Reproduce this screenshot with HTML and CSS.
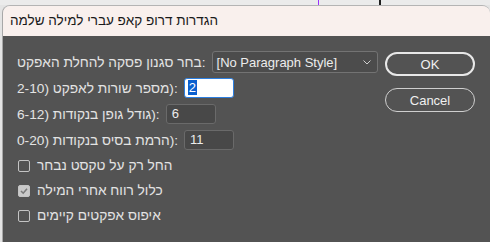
FILE: index.html
```html
<!DOCTYPE html>
<html lang="he">

<head>
  <meta charset="UTF-8">
  <meta name="viewport" content="width=device-width, initial-scale=1.0">
  <title>Drop Cap</title>
  <link rel="stylesheet" href="styles.css">
</head>

<body>
  <div class="backdrop">
    <span class="guide guide-purple"></span>
    <span class="guide guide-black"></span>
  </div>

  <div class="dialog">
    <div class="titlebar">הגדרות דרופ קאפ עברי למילה שלמה</div>

    <div class="panel">
      <div class="form">
        <div class="row">
          <label>בחר סגנון פסקה להחלת האפקט:</label>
          <div class="select">
            <span>[No Paragraph Style]</span>
            <svg width="8" height="5" viewBox="0 0 8 5"><polyline points="0.5,0.5 4,4 7.5,0.5" fill="none" stroke="#cfcfcf" stroke-width="1"/></svg>
          </div>
        </div>
        <div class="row">
          <label>2-10) <span dir="rtl">מספר שורות לאפקט</span>):</label>
          <div class="field focused"><span class="sel">2</span></div>
        </div>
        <div class="row">
          <label>6-12) <span dir="rtl">גודל גופן בנקודות</span>):</label>
          <div class="field">6</div>
        </div>
        <div class="row">
          <label>0-20) <span dir="rtl">הרמת בסיס בנקודות</span>):</label>
          <div class="field">11</div>
        </div>

        <label class="check"><span class="box"></span>החל רק על טקסט נבחר</label>
        <label class="check"><span class="box checked">
          <svg width="10" height="10" viewBox="0 0 10 10"><polyline points="2,5 4.2,7.2 8,2.8" fill="none" stroke="#7a7a7a" stroke-width="1.6"/></svg>
        </span>כלול רווח אחרי המילה</label>
        <label class="check"><span class="box"></span>איפוס אפקטים קיימים</label>
      </div>

      <div class="buttons">
        <button class="btn btn-ok">OK</button>
        <button class="btn">Cancel</button>
      </div>
    </div>
  </div>
</body>

</html>
```

FILE: styles.css
```css
/* Page */
body {
  margin: 0;
  background: #e4e4e4;
  font-family: 'Liberation Sans', 'DejaVu Sans', sans-serif;
  font-size: 13px;
  overflow: hidden;
}
.backdrop {
  height: 5px;
  background: #ebebeb;
  display: flex;
}
.guide {
  display: block;
  height: 5px;
}
.guide-purple {
  width: 1px;
  margin-left: 318px;
  background: #9b30ff;
}
.guide-black {
  width: 2px;
  margin-left: 60px;
  background: #1e1e1e;
}

/* Dialog */
.dialog {
  margin-left: 2px;
  height: 237px;
  border-top: 1px solid #b4b4b4;
  border-left: 1px solid #a8a8a8;
  border-radius: 8px 8px 0 0;
  overflow: hidden;
  display: flex;
  flex-direction: column;
}
.titlebar {
  height: 30px;
  line-height: 30px;
  padding-left: 7px;
  background: #f9f0ed;
  color: #1a1a1a;
  font-size: 13.5px;
}
.panel {
  flex: 1;
  background: #535353;
  color: #e3e3e3;
  display: flex;
  padding: 13px 15px 0 14px;
}

/* Form */
.form {
  display: flex;
  flex-direction: column;
}
.row {
  height: 26px;
  display: flex;
  align-items: center;
}
.row > label {
  white-space: nowrap;
  margin-right: 6px;
  font-size: 13.7px;
}
.select {
  width: 154px;
  height: 20px;
  padding: 0 6px 0 4px;
  border: 1px solid #737373;
  border-radius: 3px;
  background: #4c4c4c;
  color: #ececec;
  display: flex;
  align-items: center;
  justify-content: space-between;
}
.field {
  width: 43px;
  height: 18px;
  line-height: 18px;
  padding-left: 5px;
  border: 1px solid #6a6a6a;
  border-radius: 3px;
  background: #484848;
  color: #ececec;
}
.field.focused {
  padding-left: 3px;
  width: 45px;
  background: #fff;
  border-color: #2d7fe0;
}
.sel {
  background: #0a5fcf;
  color: #fff;
  padding: 0 1px;
}

/* Checkboxes */
.check {
  height: 25px;
  display: flex;
  align-items: center;
  margin-left: 1px;
  font-size: 13.7px;
}
.box {
  width: 10px;
  height: 10px;
  border: 1px solid #c4c4c4;
  border-radius: 2px;
  margin-right: 7px;
  display: flex;
  align-items: center;
  justify-content: center;
}
.box.checked {
  background: #c9c9c9;
}

/* Buttons */
.buttons {
  margin-left: auto;
  padding-top: 3px;
  display: flex;
  flex-direction: column;
  gap: 12px;
}
.btn {
  width: 90px;
  height: 24px;
  border: 1px solid #cfcfcf;
  border-radius: 12px;
  background: none;
  color: #f0f0f0;
  font-family: 'Liberation Sans', 'DejaVu Sans', sans-serif;
  font-size: 13px;
  padding: 0;
}
.btn-ok {
  border: 2px solid #e8e8e8;
}
```
